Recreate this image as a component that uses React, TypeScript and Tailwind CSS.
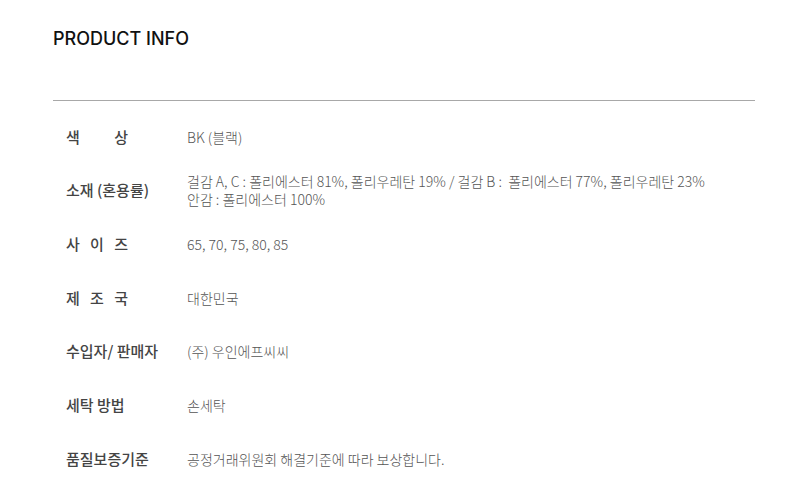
const rows: { label: React.ReactNode; value: React.ReactNode }[] = [
  { label: <Spaced chars={['색', '상']} />, value: 'BK (블랙)' },
  {
    label: '소재 (혼용률)',
    value: (
      <>
        <p>걸감 A, C : 폴리에스터 81%, 폴리우레탄 19% / 걸감 B :&nbsp; 폴리에스터 77%, 폴리우레탄 23%</p>
        <p>안감 : 폴리에스터 100%</p>
      </>
    ),
  },
  { label: <Spaced chars={['사', '이', '즈']} />, value: '65, 70, 75, 80, 85' },
  { label: <Spaced chars={['제', '조', '국']} />, value: '대한민국' },
  { label: '수입자/ 판매자', value: '(주) 우인에프씨씨' },
  { label: '세탁 방법', value: '손세탁' },
  { label: '품질보증기준', value: '공정거래위원회 해결기준에 따라 보상합니다.' },
]

function Spaced({ chars }: { chars: string[] }) {
  return (
    <span className="flex w-[62px] justify-between">
      {chars.map((c) => (
        <span key={c}>{c}</span>
      ))}
    </span>
  )
}

export default function App() {
  return (
    <div
      className="w-[800px] h-[500px] bg-white overflow-hidden"
      style={{ fontFamily: '"Noto Sans CJK KR", "Noto Sans", sans-serif' }}
    >
      <div className="px-[53px] pt-[26px]">
        {/* Title */}
        <h2
          className="text-[18px] font-medium leading-[26px] text-[#111]"
          style={{ fontFamily: 'Inter, "Noto Sans CJK KR", sans-serif' }}
        >
          PRODUCT INFO
        </h2>

        {/* Divider */}
        <div className="mt-[48px] h-px w-[702px] bg-[#a8a8a8]" />

        {/* Info table */}
        <div className="pt-[9px] pl-[13px]">
          {rows.map((row, i) => (
            <div key={i} className="flex h-[53.67px] items-center">
              <div className="w-[121px] shrink-0 text-[15px] font-medium text-[#444]">{row.label}</div>
              <div className="flex flex-col gap-0 text-[14px] font-light leading-[18px] text-[#555]">{row.value}</div>
            </div>
          ))}
        </div>
      </div>
    </div>
  )
}
